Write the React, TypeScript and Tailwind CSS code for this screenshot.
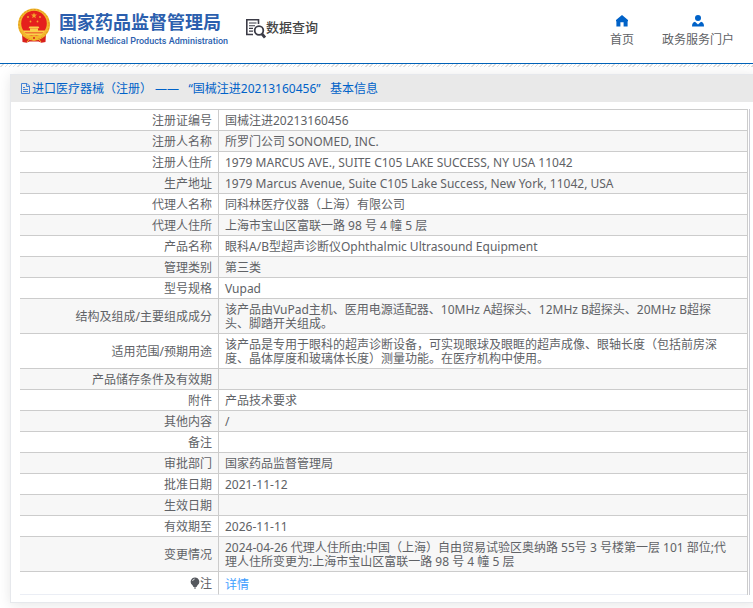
import type { ReactNode } from "react";

type Row = {
  label: ReactNode;
  value?: ReactNode;
};

const rows: Row[] = [
  { label: "注册证编号", value: "国械注进20213160456" },
  { label: "注册人名称", value: "所罗门公司 SONOMED, INC." },
  { label: "注册人住所", value: "1979 MARCUS AVE., SUITE C105 LAKE SUCCESS, NY USA 11042" },
  { label: "生产地址", value: "1979 Marcus Avenue, Suite C105 Lake Success, New York, 11042, USA" },
  { label: "代理人名称", value: "同科林医疗仪器（上海）有限公司" },
  { label: "代理人住所", value: "上海市宝山区富联一路 98 号 4 幢 5 层" },
  { label: "产品名称", value: "眼科A/B型超声诊断仪Ophthalmic Ultrasound Equipment" },
  { label: "管理类别", value: "第三类" },
  { label: "型号规格", value: "Vupad" },
  {
    label: "结构及组成/主要组成成分",
    value: "该产品由VuPad主机、医用电源适配器、10MHz A超探头、12MHz B超探头、20MHz B超探头、脚踏开关组成。",
  },
  {
    label: "适用范围/预期用途",
    value: "该产品是专用于眼科的超声诊断设备，可实现眼球及眼眶的超声成像、眼轴长度（包括前房深度、晶体厚度和玻璃体长度）测量功能。在医疗机构中使用。",
  },
  { label: "产品储存条件及有效期" },
  { label: "附件", value: "产品技术要求" },
  { label: "其他内容", value: "/" },
  { label: "备注" },
  { label: "审批部门", value: "国家药品监督管理局" },
  { label: "批准日期", value: "2021-11-12" },
  { label: "生效日期" },
  { label: "有效期至", value: "2026-11-11" },
  {
    label: "变更情况",
    value: "2024-04-26 代理人住所由:中国（上海）自由贸易试验区奥纳路 55号 3 号楼第一层 101 部位;代理人住所变更为:上海市宝山区富联一路 98 号 4 幢 5 层",
  },
];

function Emblem() {
  return (
    <svg viewBox="0 0 34 36" className="h-9 w-[34px] shrink-0" aria-hidden="true">
      <path d="M5 25h24l-.5 9-4 .8-3-1.300h-9l-3 1.300-4-.8z" fill="#d8201c" />
      <circle cx="17" cy="16.500" r="16" fill="#f3b92c" />
      <circle cx="17" cy="16.500" r="15" fill="none" stroke="#dd961f" strokeWidth="1" strokeDasharray="2 1.500" />
      <circle cx="17" cy="15.500" r="12.800" fill="#e5201d" />
      <path d="M17 4.500l.8 2.100h2.200l-1.800 1.400.7 2.200-1.900-1.300-1.900 1.300.7-2.200L14 6.600h2.200z" fill="#f5a62d" />
      <g fill="#f5a62d">
        <circle cx="11" cy="9" r=".9" />
        <circle cx="23" cy="9" r=".9" />
        <circle cx="13.500" cy="13.500" r=".9" />
        <circle cx="20.500" cy="13.500" r=".9" />
      </g>
      <path d="M12.500 18.500h9l1 1.700h-11zM13 20.500h8v2h-8zM6 22.500h22l-1 2H7zM8 25.300h18l-2 2.200H10z" fill="#fad04a" />
      <path d="M6 27.500q6 0 8.500 3M28 27.500q-6 0-8.500 3" stroke="#f3b92c" strokeWidth="1.500" fill="none" />
      <circle cx="17" cy="30" r="2.800" fill="#f3b92c" />
      <circle cx="17" cy="30" r="1" fill="#d8201c" />
      <path d="M10 34l2.500-3M24 34l-2.500-3" stroke="#f3b92c" strokeWidth="1" />
    </svg>
  );
}

function SearchDocIcon() {
  return (
    <svg viewBox="0 0 20 20" className="size-5 shrink-0" fill="none" stroke="#3b3b46" aria-hidden="true">
      <path d="M12.500 5V.8H.8v14.700H7" strokeWidth="1.600" />
      <path d="M3 4h7.500M3 6.700h6M3 9.400h4M3 12.100h4" strokeWidth="1.100" />
      <circle cx="13" cy="11.500" r="4.300" strokeWidth="1.800" />
      <path d="M16 15l3 3.500" strokeWidth="2.800" />
    </svg>
  );
}

function HomeIcon() {
  return (
    <svg viewBox="0 0 12 12" className="size-3" fill="#0062c8" aria-hidden="true">
      <path d="M6 0L0 5v1.300h.400V11.500H4.400V7.300h3.200v4.200h4V6.300H12V5z" />
    </svg>
  );
}

function UserIcon() {
  return (
    <svg viewBox="0 0 12 12" className="size-3" fill="#0062c8" aria-hidden="true">
      <circle cx="6" cy="3" r="3" />
      <path d="M3 6.800L6 9.500l3-2.700c2 .3 3 2 3 4.700H0c0-2.700 1-4.400 3-4.700z" />
    </svg>
  );
}

function DocIcon() {
  return (
    <svg viewBox="0 0 12 12" className="size-3 shrink-0" fill="none" stroke="#4583d6" strokeWidth="1" aria-hidden="true">
      <path d="M1.500 .5h5.500l2.500 2.500v7.500h-8zM6.500 .5v3h3M3 4.500h2M3 6.500h5M3 8.500h5" />
    </svg>
  );
}

function BulbIcon() {
  return (
    <svg viewBox="0 0 10 12" className="inline-block h-3 w-2.5 align-[-1px]" aria-hidden="true">
      <path d="M5 .5a4.300 4.300 0 0 0-2.500 7.800L3.500 10h3l1-1.700A4.300 4.300 0 0 0 5 .5z" fill="#55585e" />
      <path d="M4 11h2" stroke="#55585e" />
      <path d="M2.500 4Q3 2.300 4.700 2" stroke="#fff" strokeWidth=".8" fill="none" />
    </svg>
  );
}

export default function App() {
  return (
    <div className="overflow-hidden bg-white pb-2 font-['Noto_Sans','Noto_Sans_CJK_SC',sans-serif] text-xs text-[#606266]">
      <header className="flex h-16 items-start justify-between border-b border-[#0062b8] pl-[17px] pr-[19px]">
        <div className="flex items-start">
          <a href="#" className="flex items-start gap-2 pt-2 text-[#2c5fae]">
            <Emblem />
            <span className="flex flex-col whitespace-nowrap">
              <span className="text-lg font-bold leading-7">国家药品监督管理局</span>
              <span className="pl-px font-[Roboto,sans-serif] text-[9px] font-medium leading-[10px]">
                National Medical Products Administration
              </span>
            </span>
          </a>
          <a href="#" className="ml-[18px] flex items-start whitespace-nowrap pt-[19px] text-[#444]">
            <SearchDocIcon />
            <span className="text-[13px] font-medium leading-4">数据查询</span>
          </a>
        </div>
        <nav className="flex gap-7 whitespace-nowrap pt-[15px] leading-4">
          <a href="#" className="flex flex-col items-center gap-[5px]">
            <HomeIcon />
            首页
          </a>
          <a href="#" className="flex flex-col items-center gap-[5px]">
            <UserIcon />
            政务服务门户
          </a>
        </nav>
      </header>
      <div className="h-[3px] bg-[repeating-linear-gradient(135deg,#fff_0px,#fff_2px,#ddd_2px,#ddd_3px)]" />

      <main className="-mr-1 ml-2.5 mt-[7px] border border-[#e6e8ec] shadow-[0_2px_12px_rgba(0,0,0,0.1)]">
        <h1 className="flex h-[27px] items-center bg-[#e9e9e9] pl-[9px] text-[#0062c8]">
          <DocIcon />
          <span className="whitespace-pre">进口医疗器械（注册） ——   “国械注进20213160456”   基本信息</span>
        </h1>
        <div className="mb-[7px] ml-[9px] mr-1.5 mt-[7px] border-r border-[#ccccd4] pr-px">
          <table className="w-full border-separate border-spacing-0 border-r border-t border-[#ccc] leading-[14px]">
            <tbody>
              {rows.map((row, i) => (
                <tr key={i} className="h-[21px] even:bg-[#f7f7f7]">
                  <th
                    scope="row"
                    className="w-[199px] border-b border-r border-[#ccc] pb-0.5 pl-1.5 pr-1.5 pt-1 text-right font-normal"
                  >
                    {row.label}
                  </th>
                  <td className="border-b border-[#ccc] pb-0.5 pl-1.5 pr-3.5 pt-1">{row.value}</td>
                </tr>
              ))}
              <tr className="h-[23px]">
                <th
                  scope="row"
                  className="border-b border-r border-b-[#ebeef5] border-r-[#ccc] pr-1.5 pt-0.5 text-right font-normal"
                >
                  <BulbIcon />注
                </th>
                <td className="border-b border-[#ebeef5] pl-1.5 pt-1">
                  <a href="#" className="text-[#409eff]">详情</a>
                </td>
              </tr>
            </tbody>
          </table>
        </div>
      </main>
    </div>
  );
}
